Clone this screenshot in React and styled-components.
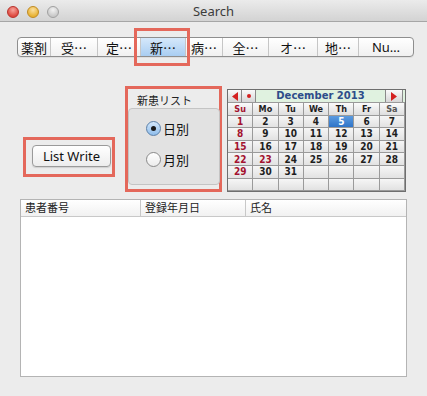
import React from 'react';
import styled, { createGlobalStyle } from 'styled-components';

const GlobalStyle = createGlobalStyle`
  html, body {
    margin: 0;
    padding: 0;
    background: #ececec;
  }
  body {
    font-family: "Lucida Grande", "Noto Sans", "Noto Sans CJK JP", sans-serif;
    color: #222;
  }
`;

const tabs = [
  { label: '薬剤', width: 33 },
  { label: '受⋯', width: 47 },
  { label: '定⋯', width: 43 },
  { label: '新⋯', width: 45, active: true },
  { label: '病⋯', width: 37 },
  { label: '全⋯', width: 46 },
  { label: 'オ⋯', width: 49 },
  { label: '地⋯', width: 41 },
  { label: 'Nu…', width: 54 },
];

const dayNames = ['Su', 'Mo', 'Tu', 'We', 'Th', 'Fr', 'Sa'];
const holidays = [23];

export default function App() {
  const cells = [];
  for (let i = 0; i < 42; i++) {
    const day = i + 1;
    cells.push(day <= 31 ? day : null);
  }

  return (
    <Window>
      <GlobalStyle />
      <TitleBar>
        <Lights>
          <Light color="red" />
          <Light color="yellow" />
          <Light color="grey" />
        </Lights>
        <Title>Search</Title>
        <span />
      </TitleBar>

      <Body>
        <SegmentBar>
          {tabs.map((t, i) => (
            <Segment key={t.label} width={t.width} active={t.active} last={i === tabs.length - 1}>
              {t.label}
              {t.active && <SegmentMark />}
            </Segment>
          ))}
        </SegmentBar>

        <Middle>
          <ButtonMark>
            <PushButton>List Write</PushButton>
          </ButtonMark>

          <GroupMark>
            <GroupLabel>新患リスト</GroupLabel>
            <GroupBox>
              <RadioRow>
                <Radio checked />
                日別
              </RadioRow>
              <RadioRow>
                <Radio />
                月別
              </RadioRow>
            </GroupBox>
          </GroupMark>

          <Calendar>
            <CalHeader>
              <NavButton>
                <svg width="6" height="9" viewBox="0 0 6 9"><path d="M6 0 L0 4.5 L6 9 Z" fill="#d42020" /></svg>
              </NavButton>
              <NavButton>
                <svg width="4" height="4" viewBox="0 0 4 4"><circle cx="2" cy="2" r="2" fill="#d42020" /></svg>
              </NavButton>
              <CalTitle>December 2013</CalTitle>
              <NavButton wide>
                <svg width="6" height="9" viewBox="0 0 6 9"><path d="M0 0 L6 4.5 L0 9 Z" fill="#d42020" /></svg>
              </NavButton>
            </CalHeader>
            <CalGrid>
              {dayNames.map((d, i) => (
                <DayName key={d} tone={i === 0 ? 'red' : i === 6 ? 'grey' : 'dark'}>{d}</DayName>
              ))}
              {cells.map((day, i) => (
                <DayCell
                  key={i}
                  selected={day === 5}
                  tone={day && (i % 7 === 0 || holidays.includes(day)) ? 'red' : 'dark'}
                >
                  {day || ''}
                </DayCell>
              ))}
            </CalGrid>
          </Calendar>
        </Middle>

        <Table>
          <TableHead>
            <HeadCell width={120}>患者番号</HeadCell>
            <HeadCell width={105}>登録年月日</HeadCell>
            <HeadCell last>氏名</HeadCell>
          </TableHead>
        </Table>
      </Body>
    </Window>
  );
}

const Window = styled.div`
  width: 427px;
  height: 396px;
  background: #ececec;
  overflow: hidden;
`;

const TitleBar = styled.div`
  height: 22px;
  display: grid;
  grid-template-columns: 1fr auto 1fr;
  align-items: center;
  background: linear-gradient(#ebebeb, #d3d3d3);
  border-bottom: 1px solid #a6a6a6;
  box-sizing: border-box;
`;

const Lights = styled.div`
  display: flex;
  gap: 8px;
  padding-left: 7px;
  padding-top: 2px;
`;

const lightColors = {
  red: ['#f7a39b', '#de4a40', '#b8302a'],
  yellow: ['#fbe0a0', '#e8b335', '#c08a20'],
  grey: ['#f2f2f2', '#c9c9c9', '#a0a0a0'],
};

const Light = styled.span`
  width: 12px;
  height: 12px;
  border-radius: 50%;
  box-sizing: border-box;
  border: 1px solid ${p => lightColors[p.color][2]};
  background: radial-gradient(circle at 50% 30%, ${p => lightColors[p.color][0]}, ${p => lightColors[p.color][1]} 70%);
`;

const Title = styled.div`
  font-size: 13px;
  color: #3c3c3c;
  padding-top: 1px;
`;

const Body = styled.div`
  padding: 15px 0 0 17px;
`;

const SegmentBar = styled.div`
  display: flex;
  width: fit-content;
  height: 20px;
  box-sizing: border-box;
  border: 1px solid #8e8e8e;
  border-radius: 4px;
  background: linear-gradient(#ffffff, #f0f0f0);
  box-shadow: 0 1px 0 rgba(0, 0, 0, 0.06);
`;

const Segment = styled.div`
  position: relative;
  width: ${p => p.width}px;
  box-sizing: border-box;
  display: flex;
  align-items: center;
  justify-content: center;
  font-size: 13px;
  color: #111;
  border-right: ${p => (p.last ? 'none' : '1px solid #c6c6c6')};
  background: ${p => (p.active ? 'linear-gradient(#d6e8fb, #a9cdf2)' : 'transparent')};
`;

const SegmentMark = styled.span`
  position: absolute;
  left: -7px;
  right: -5px;
  top: -10px;
  bottom: -10px;
  border: 3px solid #e4685b;
  pointer-events: none;
`;

const Middle = styled.div`
  display: flex;
  align-items: flex-start;
  margin: 29px 0 0 6px;
`;

const ButtonMark = styled.div`
  width: 92px;
  height: 40px;
  box-sizing: border-box;
  margin-top: 51px;
  border: 3px solid #e4685b;
  padding: 4px 0 0 6px;
`;

const PushButton = styled.button`
  width: 79px;
  height: 22px;
  padding: 0;
  font-family: inherit;
  font-size: 13px;
  color: #111;
  border: 1px solid #9a9a9a;
  border-radius: 4px;
  background: linear-gradient(#ffffff, #ededed);
  box-shadow: 0 1px 1px rgba(0, 0, 0, 0.12);
`;

const GroupMark = styled.div`
  width: 97px;
  height: 106px;
  box-sizing: border-box;
  margin-left: 10px;
  border: 3px solid #e4685b;
  display: flex;
  flex-direction: column;
`;

const GroupLabel = styled.div`
  font-size: 11px;
  color: #222;
  padding: 3px 0 0 9px;
  height: 19px;
  box-sizing: border-box;
`;

const GroupBox = styled.div`
  width: 92px;
  height: 77px;
  box-sizing: border-box;
  border: 1px solid #c4c4c4;
  border-radius: 4px;
  background: #e2e2e2;
  display: flex;
  flex-direction: column;
  padding: 11px 0 0 17px;
  gap: 14px;
`;

const RadioRow = styled.div`
  display: flex;
  align-items: center;
  gap: 2px;
  font-size: 13px;
  color: #111;
  height: 17px;
`;

const Radio = styled.span`
  width: 15px;
  height: 15px;
  box-sizing: border-box;
  border-radius: 50%;
  border: 1px solid ${p => (p.checked ? '#5a7fa8' : '#8a8a8a')};
  background: ${p => (p.checked ? 'linear-gradient(#d3e7fb, #8fbdeb)' : 'linear-gradient(#ffffff, #ececec)')};
  display: flex;
  align-items: center;
  justify-content: center;
  &::after {
    content: '';
    width: 5px;
    height: 5px;
    border-radius: 50%;
    background: ${p => (p.checked ? '#1a1a1a' : 'transparent')};
  }
`;

const Calendar = styled.div`
  width: 177px;
  margin: 3px 0 0 5px;
  border: 1px solid #6e6e6e;
  background: #f0f0f0;
`;

const CalHeader = styled.div`
  height: 12px;
  display: flex;
  align-items: stretch;
  background: #e0f2e0;
  border-bottom: 1px solid #9a9a9a;
`;

const NavButton = styled.div`
  width: ${p => (p.wide ? 16 : 13)}px;
  display: flex;
  align-items: center;
  justify-content: center;
  background: linear-gradient(#fafafa, #d6d6d6);
  border-right: 1px solid #8a8a8a;
  border-left: ${p => (p.wide ? '1px solid #8a8a8a' : 'none')};
  margin-right: ${p => (p.wide ? '2px' : '0')};
`;

const CalTitle = styled.div`
  flex: 1;
  text-align: center;
  font-family: "DejaVu Sans", sans-serif;
  font-weight: bold;
  font-size: 10px;
  line-height: 12px;
  color: #2d4d8a;
`;

const CalGrid = styled.div`
  display: grid;
  grid-template-columns: repeat(7, 1fr);
  grid-auto-rows: 12.6px;
`;

const toneColors = { red: '#a3122f', grey: '#555', dark: '#1e1e1e' };

const DayName = styled.div`
  display: flex;
  align-items: center;
  justify-content: center;
  font-family: "DejaVu Sans Condensed", "DejaVu Sans", sans-serif;
  font-weight: bold;
  font-size: 9px;
  color: ${p => toneColors[p.tone]};
  background: linear-gradient(#fbfbfb, #dedede);
  border-right: 1px solid #9a9a9a;
  border-bottom: 1px solid #9a9a9a;
  box-sizing: border-box;
`;

const DayCell = styled(DayName)`
  font-size: 10px;
  color: ${p => (p.selected ? '#fff' : toneColors[p.tone])};
  background: ${p => (p.selected ? 'linear-gradient(#5b9be0, #2f74c8)' : 'linear-gradient(#f6f6f6, #e2e2e2)')};
`;

const Table = styled.div`
  width: 387px;
  height: 178px;
  margin: 7px 0 0 3px;
  box-sizing: border-box;
  border: 1px solid #b4b4b4;
  background: #fff;
`;

const TableHead = styled.div`
  display: flex;
  height: 16px;
  border-bottom: 1px solid #c8c8c8;
  background: linear-gradient(#ffffff, #f1f1f1);
`;

const HeadCell = styled.div`
  ${p => (p.last ? 'flex: 1;' : `width: ${p.width}px;`)}
  box-sizing: border-box;
  padding-left: 4px;
  font-size: 11px;
  line-height: 16px;
  color: #222;
  border-right: ${p => (p.last ? 'none' : '1px solid #c8c8c8')};
`;
